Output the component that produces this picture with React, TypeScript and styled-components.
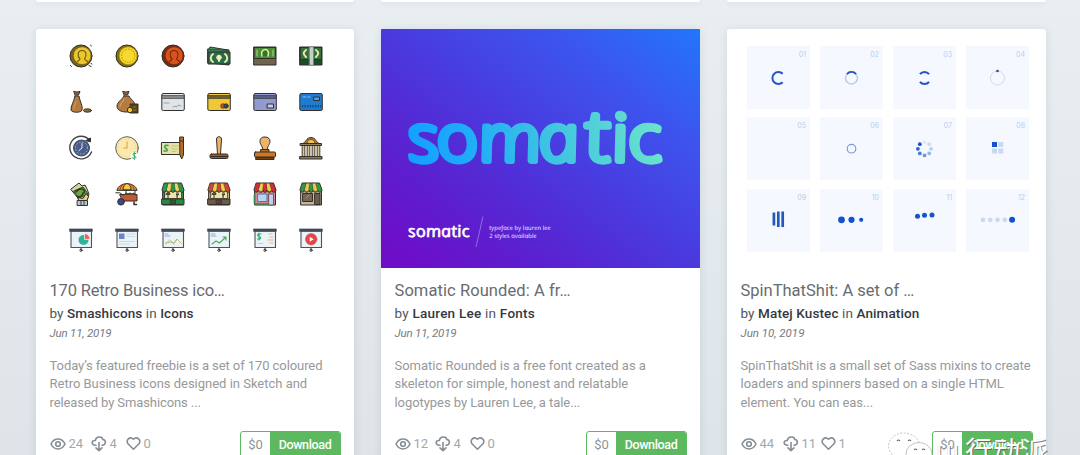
import React from "react";
import styled, { createGlobalStyle } from "styled-components";

const GlobalStyle = createGlobalStyle`
  *, *::before, *::after { box-sizing: border-box; }
  body { margin: 0; font-family: Roboto, "Open Sans", sans-serif; }
`;

const Page = styled.main`
  position: relative;
  width: 1080px;
  height: 455px;
  overflow: hidden;
  padding-left: 36px;
  display: flex;
  flex-direction: column;
  gap: 27px;
  background: linear-gradient(180deg, #e9eef1 0%, #e3e9ed 50%, #dee4e8 100%);
`;

const CardRow = styled.div`
  display: grid;
  grid-template-columns: 318px 319px 319px;
  column-gap: 27px;
`;

const CardEnd = styled.div`
  height: 2px;
  background: #fff;
  border-radius: 0 0 2px 2px;
  box-shadow: 0 1px 5px rgba(90, 110, 125, 0.16);
`;

const Card = styled.article`
  height: 450px;
  background: #fff;
  border-radius: 3px;
  box-shadow: 0 1px 8px rgba(90, 110, 125, 0.17);
`;

const Cover = styled.div`
  height: 239px;
  border-radius: 3px 3px 0 0;
  overflow: hidden;
`;

const IconGrid = styled(Cover)`
  display: grid;
  grid-template-columns: repeat(6, 24px);
  grid-auto-rows: 24px;
  column-gap: 22px;
  row-gap: 21.9px;
  padding: 15px 0 0 33px;
`;

const Retro = styled.svg`
  width: 24px;
  height: 24px;
  display: block;
  overflow: visible;
`;

const Poster = styled(Cover)`
  border-radius: 1px 1px 0 0;
  background: linear-gradient(217deg, #2276fb 0%, #3c55ee 24%, #4c36dc 53%, #5b20cf 74%, #720ac6 100%);
`;

const PosterArt = styled.svg`
  display: block;
  width: 319px;
  height: 239px;
`;

const TileGrid = styled(Cover)`
  display: grid;
  grid-template-columns: repeat(4, 63.5px);
  grid-auto-rows: 63px;
  column-gap: 9.5px;
  row-gap: 8.4px;
  padding: 17px 0 0 19.5px;
`;

const Tile = styled.div`
  background: #f5f9ff;
  padding: 4px 4px 0 0;
`;

const TileNumber = styled.div`
  font: 400 7px/10px Inter, sans-serif;
  height: 10px;
  text-align: right;
  color: #b9cdec;
`;

const Spinner = styled.svg`
  display: block;
  width: 63px;
  height: 40px;
`;

const Body = styled.div`
  padding: 11px 13px 0 13.5px;
`;

const Title = styled.h2<{ $track: number }>`
  margin: 0;
  font-size: 16.5px;
  line-height: 24px;
  font-weight: 400;
  color: #686b70;
  white-space: nowrap;
  letter-spacing: ${(p) => p.$track}px;
`;

const Byline = styled.p<{ $track: number }>`
  margin: 0;
  font-size: 13.5px;
  line-height: 20px;
  color: #50555b;
  white-space: nowrap;
  letter-spacing: ${(p) => p.$track}px;

  strong { font-weight: 500; color: #34393f; }
`;

const PostDate = styled.p<{ $track: number }>`
  margin: 0;
  font-size: 11.5px;
  line-height: 20px;
  font-style: italic;
  color: #777a7e;
  letter-spacing: ${(p) => p.$track}px;
`;

const Excerpt = styled.div`
  margin-top: 13.5px;
  font-size: 13px;
  line-height: 18.6px;
  color: #97999b;
`;

const ExcerptLine = styled.div<{ $track: number }>`
  white-space: nowrap;
  letter-spacing: ${(p) => p.$track}px;
`;

const Footer = styled.div`
  margin-top: 18.7px;
  display: flex;
  justify-content: space-between;
`;

const Stats = styled.div`
  display: flex;
  height: 26px;
  align-items: center;
`;

const Stat = styled.span<{ $width: number }>`
  display: flex;
  align-items: center;
  gap: 3px;
  width: ${(p) => p.$width}px;
  font-size: 13px;
  line-height: 16px;
  color: #a3a8ad;

  svg { flex: none; display: block; }
`;

const Count = styled.span`
  padding-top: 1px;
`;

const Buy = styled.div`
  display: flex;
  width: 101px;
  height: 27px;
  border: 1px solid #5cb95f;
  border-radius: 3px;
  overflow: hidden;
  font-size: 13px;
  line-height: 25px;
  text-align: center;
`;

const Price = styled.span`
  width: 29px;
  color: #8d959c;
`;

const Download = styled.span`
  flex: 1;
  background: #5cb95f;
  color: #fff;
  font-size: 12.5px;
  font-weight: 500;
  letter-spacing: -0.35px;
`;

const Watermark = styled.div`
  position: absolute;
  left: 888px;
  top: 431px;
  display: flex;
  color: #fff;
  font: 400 27px/32px "Noto Sans CJK SC", sans-serif;
  white-space: nowrap;
  text-shadow: 1px 1px 0 rgba(90, 90, 90, 0.75), -0.5px -0.5px 0 rgba(150, 150, 150, 0.4);
  letter-spacing: 1px;
`;

const WatermarkLogo = styled.svg`
  width: 48px;
  height: 36px;
`;

const WatermarkLatin = styled.span`
  width: 29px;
  margin-top: 4px;
  font-size: 22px;
`;

const WatermarkName = styled.span`
  margin-top: 3px;
`;

const dark = "#33302c";

function Base({ children }: { children: React.ReactNode }) {
  return (
    <Retro viewBox="0 0 24 24" fill="none" stroke={dark} strokeWidth="1" strokeLinejoin="round" strokeLinecap="round">
      {children}
    </Retro>
  );
}

function Coin({ rim, face, line, head, sparks }: { rim: string; face: string; line: string; head?: boolean; sparks?: boolean }) {
  return (
    <Base>
      <circle cx="12" cy="12" r="11" fill={rim} />
      <circle cx="13.2" cy="11.7" r="9" fill={face} stroke={line} strokeWidth="0.8" />
      {head ? (
        <path d="M8 18c1-2 3-1.8 3-3-3-3-2.5-8.5 2-8.5S18 11 15.6 14.8c0 1.5 2 1.3 3 3" stroke={line} strokeWidth="1.1" />
      ) : (
        <circle cx="13.2" cy="11.7" r="6.6" stroke={line} strokeDasharray="0.6 2" strokeWidth="1" />
      )}
      {sparks && <path d="M21.5 1.2l1 .8M1.5 21.5l1 1M20 21.5l2 1M22 19.5l1 .5" />}
    </Base>
  );
}

function Note({ kind }: { kind: number }) {
  if (kind === 0)
    return (
      <Base>
        <path d="M1 5l21 1v15L1 19z" fill="#3c7a55" />
        <path d="M2 5l1-2 18 3" fill="#4f8d63" />
        <rect x="1.5" y="8" width="21.500" height="12" fill="#2b6b49" />
        <path d="M6 10c-3 2-3 6 0 8M18 10c3 2 3 6 0 8M12 17v-2" stroke="#e9efae" strokeWidth="2" />
        <circle cx="12" cy="13.500" r="2.300" fill="#f2f0bb" stroke="#e9efae" />
      </Base>
    );
  if (kind === 1)
    return (
      <Base>
        <rect x="1" y="3" width="22" height="18" fill="#70644c" />
        <rect x="1.500" y="3.500" width="21" height="11" fill="#4b8d39" />
        <path d="M4 6v6M20 6v6" stroke="#b5d88b" strokeWidth="1" />
        <path d="M9 12c-3-8 9-9 6 0" fill="#32722a" stroke="#e3f0a6" strokeWidth="1.500" />
      </Base>
    );
  return (
    <Base>
      <rect x="1" y="3" width="22" height="18" fill="#1d4a28" />
      <rect x="1.500" y="3.500" width="21" height="12" fill="#357138" />
      <path d="M7 6c-3 2-3 4 0 7M17 6c3 2 3 4 0 7" stroke="#e5edb0" strokeWidth="2" />
      <rect x="10.500" y="3" width="4" height="18" fill="#c6cfcb" stroke="#777" strokeWidth=".5" />
    </Base>
  );
}

function Bag({ round }: { round?: boolean }) {
  return (
    <Base>
      <path d="M5 1.500q3 1 6 0L9.500 5h-3z" fill="#8e6244" transform={round ? "translate(3)" : ""} />
      {round ? (
        <path d="M9 6h5c1 3 6 5 6 10 0 4-3 6-8.500 6S2 20 2 16 8 9 9 6z" fill="#b57b43" />
      ) : (
        <path d="M6 6h4c1 6 4 10 3 14-.5 3-10.500 3-11 0C1.500 16 5 12 6 6z" fill="#b57b43" />
      )}
      {round ? (
        <>
          <path d="M5 16c0-3 4-4 4-7" stroke="#e8a965" />
          <rect x="15.500" y="14" width="7.500" height="9" fill="#55410f" />
          <circle cx="15" cy="20" r="2.700" fill="#f5c632" />
          <path d="M18 17h3M18 20h3" stroke="#9d7b1c" />
        </>
      ) : (
        <>
          <path d="M5 19c-1-3 2-5 2-8" stroke="#d59a5c" />
          <ellipse cx="18.500" cy="20.500" rx="4" ry="1.700" fill="#877038" />
        </>
      )}
    </Base>
  );
}

function CreditCard({ fill, band, kind }: { fill: string; band: string; kind: number }) {
  return (
    <Base>
      <rect x=".8" y="3.500" width="22.500" height="17" rx="1.500" fill={fill} />
      {kind !== 3 && <path d="M1.300 5.500h21.500v3H1.300z" fill={band} strokeWidth=".6" />}
      {kind === 0 && <path d="M3 13h5m4 4l2-1 1 1 3-2 2 1" stroke="#9199a5" strokeWidth=".9" />}
      {kind === 1 && (
        <g strokeWidth=".7">
          <circle cx="16" cy="16" r="2.300" fill="#e5463b" />
          <circle cx="19" cy="16" r="2.300" fill="#33426a" />
        </g>
      )}
      {kind === 2 && <rect x="14.500" y="14" width="6" height="4" fill="#c3cbf0" />}
      {kind === 3 && (
        <>
          <rect x="15" y="7" width="5.500" height="3.500" fill="#48a1ea" />
          <path d="M4 7h3M9 7h2" stroke="#7fc4f6" />
          <path d="M3 16.300h19" stroke="#0c3c75" strokeWidth="2" strokeDasharray="1.200 1.400" strokeLinecap="butt" />
        </>
      )}
    </Base>
  );
}

function Clock({ light }: { light?: boolean }) {
  return light ? (
    <Base>
      <circle cx="12" cy="12" r="11.300" fill="#fbe9ae" stroke="#686055" />
      <circle cx="12" cy="12" r="9" stroke="#e8ce88" strokeDasharray=".6 3" />
      <path d="M12 6v6H9" stroke="#e3b95d" strokeWidth="1.500" />
      <circle cx="19.500" cy="20" r="4" fill="#fff" stroke="none" />
      <path d="M21 17.500c-5-1-3 2-1.500 2.500s3 3-2 2M19.300 16v7.500" stroke="#35ae5e" strokeWidth="1" />
    </Base>
  ) : (
    <Base>
      <path d="M20.500 4A11.300 11.300 0 1 0 22.500 16" stroke="#44444a" strokeWidth="1.400" />
      <path d="M17 4.500l4.500-2.500v3.500z" fill={dark} />
      <circle cx="12.500" cy="12" r="8" fill="#4a5e88" stroke="#3c496c" />
      <circle cx="12.500" cy="12" r="6" stroke="#a9b7d8" strokeDasharray=".6 2.600" />
      <path d="M13 7.500V12l-3 2.500" stroke="#e4ebfb" />
    </Base>
  );
}

function Cheque() {
  return (
    <Base>
      <rect x=".8" y="6.500" width="21.500" height="12" fill="#e4e1a5" />
      <path d="M11 10h6M11 13h6M11 15.500h4" stroke="#c2b87a" strokeWidth=".8" />
      <path d="M7 9.500c-5-1-3 2.500-2 3s3 3-2 2.500" stroke="#35a156" strokeWidth="1.500" />
      <path d="M19 1h3.500v18L20.700 23 19 19z" fill="#b96a22" />
      <path d="M19 5h3.500" />
    </Base>
  );
}

function Stamp({ round }: { round?: boolean }) {
  return (
    <Base>
      {round ? (
        <>
          <path d="M10 15c0-5-3-6-3-9.500S9 1 12 1s5 1.500 5 4.500-3 4.500-3 9.500z" fill="#eeb46b" />
          <rect x="8" y="13.500" width="8" height="3" fill="#bb661b" />
          <rect x="1.500" y="16" width="21" height="5" rx="1" fill="#ce7625" />
          <path d="M3 21.500h18v2H3z" fill="#7b430f" />
        </>
      ) : (
        <>
          <path d="M10.500 18L9.500 3c0-3 5-3 5 0l-1 15z" fill="#eeb46b" />
          <rect x="3" y="18" width="18" height="4.500" rx="1.500" fill="#a9571b" />
          <path d="M4 20.500h16" />
        </>
      )}
    </Base>
  );
}

function Bank() {
  return (
    <Base>
      <path d="M3 8c4-1 4-6.500 9-6.500S17 7 21 8z" fill="#b17c2d" />
      <path d="M8 7c1-5 7-5 8 0" fill="#f1c154" stroke="#6f4c1c" />
      <path d="M1.500 7.500h21v2h-21z" fill="#8e8266" />
      <path d="M4.500 10v10M9.500 10v10M14.500 10v10M19.500 10v10" stroke={dark} strokeWidth="3.600" strokeLinecap="butt" />
      <path d="M4.500 10v10M9.500 10v10M14.500 10v10M19.500 10v10" stroke="#d8c795" strokeWidth="1.800" strokeLinecap="butt" />
      <path d="M1 20.500h22V23H1z" fill="#897b58" />
    </Base>
  );
}

function HandMoney() {
  return (
    <Base>
      <path d="M2 7l8-6 3 3 3-1 2 4 2 5-2 6-8-1z" fill="#cfd8a0" />
      <path d="M5 9l9-4 5 7-9 4z" fill="#70a344" />
      <path d="M7 10c3-5 10-3 8 1M8 14c3 2 6-1 6-3" stroke="#26401c" strokeWidth="1.500" />
      <path d="M9 15.500l5 1 3-5 2.500 3-1.500 4-7.500 1z" fill="#e3cf7e" />
      <path d="M8.500 18.500h10v5h-10z" fill="#b9c6cf" />
      <path d="M12 19v4M15 19v4" stroke="#39424a" />
    </Base>
  );
}

function Cart() {
  return (
    <Base>
      <path d="M11 8v7M20 8v7" />
      <path d="M2 8C4-.5 20-.5 22 8z" fill="#dd9226" />
      <path d="M8 7.500C8 4 10 2 12 1.500 14 2 16 4 16 7.500z" fill="#f3cd47" />
      <path d="M5 7.500C5 5 7 3 9 2M19 7.500C19 5 17 3 15 2" stroke="#b23d23" />
      <path d="M5 12.500h17v6.500H8z" fill="#c75733" />
      <path d="M.8 10.800h4l3 2.200" />
      <path d="M9 13l2-2 2 1 2-1 2 1 2-1 1 2" fill="#604a28" />
      <circle cx="6" cy="19.800" r="3.300" fill="#354a91" />
      <path d="M19 20v2.500h2.500" strokeWidth="1.500" />
    </Base>
  );
}

function Shop({ a, b, body, kind }: { a: string; b: string; body: string; kind: number }) {
  return (
    <Base>
      <rect x="2" y="8" width="20.500" height="15" fill={body} />
      {kind < 2 && (
        <>
          <rect x="4" y="9" width="16.500" height="7.500" fill="#f1e4a8" strokeWidth=".7" />
          <path d="M7 16v-3M5 12c1-2 4-2 4 0zM16 16v-3l-1-1h3l-1 1" fill="#c84533" />
          <path d="M1 17h22v5.500H1z" fill={kind ? "#6d5b4a" : "#258943"} />
          <path d="M9.500 18h5v4h-5z" fill={kind ? "#574539" : "#335a2c"} strokeWidth=".7" />
        </>
      )}
      {kind === 2 && (
        <>
          <rect x="5" y="12" width="9" height="7.500" fill="#b9d4f0" stroke="#5672a0" />
          <rect x="16" y="12" width="4.500" height="11" fill="#b9d4f0" stroke="#804f58" />
          <path d="M1.500 13v8M3 22h12" stroke="#2e8a4d" strokeWidth="1.700" />
        </>
      )}
      {kind === 3 && (
        <>
          <rect x="4" y="11.500" width="9.500" height="8" fill="#786655" />
          <rect x="16" y="11.500" width="5" height="11" fill="#6b5d4c" />
          <path d="M7 16l3-3" stroke="#a39480" />
        </>
      )}
      <path d="M3.500 1h17L23 8c0 3-4.400 3-4.400 0 0 3-4.400 3-4.400 0 0 3-4.400 3-4.400 0 0 3-4.400 3-4.400 0 0 3-4.400 3-4.400 0z" fill={a} />
      <path d="M7.500 1.300h3L9.700 8.500C9 10 6.200 9.800 5.500 8.200zM13.500 1.300h3l2 7c-.8 1.500-3.500 1.500-4.200 0z" fill={b} strokeWidth=".4" />
    </Base>
  );
}

function Board({ children }: { children: React.ReactNode }) {
  return (
    <Base>
      <path d="M12 19.500v2" />
      <rect x="2" y="3" width="20.500" height="16.500" fill="#eaf3f8" stroke="#4a5260" strokeWidth="1.100" />
      <rect x=".8" y="1" width="22.500" height="2.300" fill="#454c5c" stroke="#3b4250" strokeWidth=".7" />
      <circle cx="12" cy="22.300" r="1.100" fill="#fff" />
      {children}
    </Base>
  );
}

const retroIcons = [
  <Coin rim="#776617" face="#edc52d" line="#675716" head sparks />,
  <Coin rim="#806e13" face="#f6d92c" line="#ae8e0c" />,
  <Coin rim="#732d13" face="#d9531c" line="#76260d" head />,
  <Note kind={0} />,
  <Note kind={1} />,
  <Note kind={2} />,
  <Bag />,
  <Bag round />,
  <CreditCard fill="#dfe4e8" band="#858990" kind={0} />,
  <CreditCard fill="#efc837" band="#706027" kind={1} />,
  <CreditCard fill="#929bd0" band="#585f86" kind={2} />,
  <CreditCard fill="#1f7bd0" band="#1f7bd0" kind={3} />,
  <Clock />,
  <Clock light />,
  <Cheque />,
  <Stamp />,
  <Stamp round />,
  <Bank />,
  <HandMoney />,
  <Cart />,
  <Shop a="#2c9649" b="#efd565" body="#318d44" kind={0} />,
  <Shop a="#cf4931" b="#f0cf53" body="#c8ab70" kind={1} />,
  <Shop a="#cf2f35" b="#efcf4c" body="#d38a90" kind={2} />,
  <Shop a="#329548" b="#f0c74a" body="#c4b698" kind={3} />,
  <Board>
    <circle cx="14.500" cy="12" r="5" fill="#2eb597" stroke="none" />
    <path d="M15.500 11V5.500a5.500 5.500 0 0 1 5.500 5.500z" fill="#ef6160" stroke="#eaf3f8" strokeWidth=".8" />
  </Board>,
  <Board>
    <rect x="4" y="5.500" width="5.500" height="5.500" fill="#6d82c8" stroke="none" />
    <path d="M12 6h8M12 8.500h8M4.500 13.500h15M4.500 16h10" stroke="#c5d0de" strokeWidth=".8" />
  </Board>,
  <Board>
    <path d="M4 6h3M4 8h5" stroke="#98a9d8" />
    <path d="M4.500 16l4-4 4 3 3.500-4 4.500 4.500" stroke="#d7b85e" />
    <path d="M5 15l5-1 3 2 3-5" stroke="#83b979" strokeDasharray="1 1.500" />
  </Board>,
  <Board>
    <path d="M4 6h4M4 8h5" stroke="#98a9d8" />
    <path d="M5 16l4-3 3.500 2 6.500-6m-3 0h3v3" stroke="#54a461" strokeWidth="1.100" />
  </Board>,
  <Board>
    <path d="M8 6c-4-1-4 2-2 2.500s3 3-1.500 2.500M6 5v7" stroke="#37a967" strokeWidth="1.100" />
    <path d="M16 6h3M17 9h3M15 12h5M17 15h3" stroke="#ebb08a" strokeWidth="1" />
    <path d="M5 15.500h5" stroke="#c5d0de" />
  </Board>,
  <Board>
    <circle cx="12.200" cy="11.200" r="5.700" fill="#e84545" stroke="#d43c3d" strokeWidth=".5" />
    <path d="M10.700 8.700v5l4-2.500z" fill="#fff" stroke="none" />
  </Board>,
];

const blue = "#1553cd";
const pale = "#cbd9f0";

/* Each drawing is centred on the origin of its tile. */
const spinners: React.ReactNode[] = [
  <path d="M4.200-4.200A6 6 0 1 0 4.200 4.200" stroke="#2454c9" strokeWidth="2" />,
  <>
    <circle r="6" stroke="#b8cef0" strokeWidth="1.600" />
    <path d="M-4.600-3.900A6 6 0 0 1 4.600-3.900" stroke="#2454b9" strokeWidth="1.700" />
  </>,
  <path d="M-4.600-3.900A6 6 0 0 1 4.600-3.900M-4.600 3.900A6 6 0 0 0 4.600 3.900" stroke="#2454c9" strokeWidth="2" />,
  <>
    <circle r="7" stroke="#c6d8e9" strokeWidth=".9" />
    <circle cy="-7" r="1.300" fill="#2450a0" />
  </>,
  null,
  <circle r="4.300" cy="-.3" stroke="#7a9bdc" strokeWidth="1.200" />,
  <>
    {["#e1eafb", "#ccdaf3", "#b9cdf0", "#98b5e8", "#7195de", "#4e7cd2", "#2b62cf", "#1553cd"].map((fill, i) => (
      <circle key={i} r="1.900" cx={6.600 * Math.sin((i * Math.PI) / 4)} cy={-0.2 - 6.600 * Math.cos((i * Math.PI) / 4)} fill={fill} />
    ))}
  </>,
  <>
    <path d="M-5.500-7h5v5h-5z" fill={blue} />
    <path d="M.8-7h5v5h-5zM-5.500-.5h5v5h-5zM.8-.5h5v5h-5z" fill={pale} />
  </>,
  <path d="M-4.600-8.500V4.500M-.2-9.500V6M4.200-9.500V6" stroke="#2456bc" strokeWidth="2.700" />,
  <>
    <circle cx="-10" cy="-1.200" r="3.400" fill={blue} />
    <circle cy="-1.200" r="3.100" fill={blue} />
    <circle cx="9.700" cy="-1.200" r="2.100" fill={blue} />
  </>,
  <>
    <circle cx="-7" cy="-4.700" r="2.500" fill={blue} />
    <circle cy="-5.700" r="2.500" fill={blue} />
    <circle cx="7.500" cy="-6" r="2.500" fill={blue} />
  </>,
  <>
    {[-14.500, -7.300, 0, 7.300].map((cx) => (
      <circle key={cx} cx={cx} cy="-1.200" r="2.400" fill={pale} />
    ))}
    <circle cx="14.600" cy="-1.200" r="3" fill={blue} />
  </>,
];

/* The italic cut has the single-storey "a"; a skew brings it upright again. */
const LogoText = styled.text`
  font-family: "Open Sans", "Noto Sans", sans-serif;
  font-style: italic;
  stroke-linejoin: round;
  stroke-linecap: round;
`;

function SomaticPoster() {
  return (
    <Poster>
      <PosterArt viewBox="0 0 319 239">
        <defs>
          <linearGradient id="wordmark" gradientUnits="userSpaceOnUse" x1="0" y1="0" x2="232" y2="0">
            <stop offset="0" stopColor="#12a0ff" />
            <stop offset=".25" stopColor="#20acf8" />
            <stop offset=".6" stopColor="#42c7df" />
            <stop offset="1" stopColor="#6ce3cb" />
          </linearGradient>
        </defs>
        <g transform="translate(27.500 132) skewX(12) scale(1.12 1)">
          <LogoText x="3 28.500 66 119.500 161.500 185 199.500" fontSize="65" fontWeight="300" fill="url(#wordmark)" stroke="url(#wordmark)" strokeWidth="6">
            soma<tspan fontSize="70">t</tspan>ic
          </LogoText>
        </g>
        <g transform="translate(28 207.500) skewX(12)">
          <LogoText fontSize="16.500" fontWeight="400" fill="#fff" stroke="#fff" strokeWidth=".6" textLength="61.500" lengthAdjust="spacingAndGlyphs">
            somatic
          </LogoText>
        </g>
        <path d="M102 187.500L95 218" stroke="#a78bea" strokeWidth=".7" />
        <g transform="translate(108.500 200.500) skewX(12)">
          <LogoText fontSize="6" fontWeight="500" fill="#efe6ff" textLength="61.500" lengthAdjust="spacingAndGlyphs">
            typeface by lauren lee
          </LogoText>
        </g>
        <g transform="translate(108.500 209) skewX(12)">
          <LogoText fontSize="6" fontWeight="500" fill="#efe6ff" textLength="47.500" lengthAdjust="spacingAndGlyphs">
            2 styles available
          </LogoText>
        </g>
      </PosterArt>
    </Poster>
  );
}

const outline = { fill: "none", stroke: "#858d96", strokeLinecap: "round", strokeLinejoin: "round" } as const;

function EyeIcon() {
  return (
    <svg width="16" height="16" viewBox="0 0 16 16" {...outline} strokeWidth="1.600">
      <path d="M1 8c3.300-6.600 10.700-6.600 14 0-3.300 6.600-10.700 6.600-14 0z" />
      <circle cx="8" cy="8" r="2.300" />
    </svg>
  );
}

function CloudDownIcon() {
  return (
    <svg width="16" height="16" viewBox="0 0 16 16" {...outline} strokeWidth="1.600">
      <path d="M5 9.200H3.800C.2 8.600.4 4.300 4.200 4.500 5-.2 11.500.1 11.700 3.500c3.800.5 3.500 5.500-.7 5.700" />
      <path d="M8 6.500V14.500M5 11.800l3 2.900 3-2.900" />
    </svg>
  );
}

function HeartIcon() {
  return (
    <svg width="15" height="15" viewBox="0 0 15 15" {...outline} strokeWidth="1.600">
      <path d="M7.500 13.200L2.200 8C-.6 4.500 3.700-.6 7.500 3.200 11.300-.6 15.600 4.500 12.800 8z" />
    </svg>
  );
}

type Line = [text: string, track: number];

interface Post {
  cover: React.ReactNode;
  title: Line;
  author: string;
  category: string;
  bylineTrack: number;
  date: Line;
  lines: Line[];
  stats: [number, number, number];
  statWidths: [number, number];
}

const posts: Post[] = [
  {
    cover: (
      <IconGrid>
        {retroIcons.map((icon, i) => (
          <React.Fragment key={i}>{icon}</React.Fragment>
        ))}
      </IconGrid>
    ),
    title: ["170 Retro Business ico…", -0.17],
    author: "Smashicons",
    category: "Icons",
    bylineTrack: 0.1,
    date: ["Jun 11, 2019", -0.17],
    lines: [
      ["Today’s featured freebie is a set of 170 coloured", -0.08],
      ["Retro Business icons designed in Sketch and", -0.01],
      ["released by Smashicons ...", -0.1],
    ],
    stats: [24, 4, 0],
    statWidths: [41, 35],
  },
  {
    cover: <SomaticPoster />,
    title: ["Somatic Rounded: A fr…", 0.08],
    author: "Lauren Lee",
    category: "Fonts",
    bylineTrack: 0.24,
    date: ["Jun 11, 2019", -0.17],
    lines: [
      ["Somatic Rounded is a free font created as a", -0.02],
      ["skeleton for simple, honest and relatable", 0],
      ["logotypes by Lauren Lee, a tale...", -0.06],
    ],
    stats: [12, 4, 0],
    statWidths: [40, 35],
  },
  {
    cover: (
      <TileGrid>
        {spinners.map((art, i) => (
          <Tile key={i}>
            <TileNumber>{String(i + 1).padStart(2, "0")}</TileNumber>
            <Spinner viewBox="-31.500 -18 63 40" fill="none">
              {art}
            </Spinner>
          </Tile>
        ))}
      </TileGrid>
    ),
    title: ["SpinThatShit: A set of …", 0],
    author: "Matej Kustec",
    category: "Animation",
    bylineTrack: 0.11,
    date: ["Jun 10, 2019", 0],
    lines: [
      ["SpinThatShit is a small set of Sass mixins to create", -0.1],
      ["loaders and spinners based on a single HTML", 0],
      ["element. You can eas...", -0.05],
    ],
    stats: [44, 11, 1],
    statWidths: [42, 38],
  },
];

export default function App() {
  return (
    <Page>
      <GlobalStyle />
      <CardRow>
        <CardEnd />
        <CardEnd />
        <CardEnd />
      </CardRow>
      <CardRow>
        {posts.map((post) => (
          <Card key={post.author}>
            {post.cover}
            <Body>
              <Title $track={post.title[1]}>{post.title[0]}</Title>
              <Byline $track={post.bylineTrack}>
                by <strong>{post.author}</strong> in <strong>{post.category}</strong>
              </Byline>
              <PostDate $track={post.date[1]}>{post.date[0]}</PostDate>
              <Excerpt>
                {post.lines.map(([text, track]) => (
                  <ExcerptLine key={text} $track={track}>
                    {text}
                  </ExcerptLine>
                ))}
              </Excerpt>
              <Footer>
                <Stats>
                  <Stat $width={post.statWidths[0]}>
                    <EyeIcon />
                    <Count>{post.stats[0]}</Count>
                  </Stat>
                  <Stat $width={post.statWidths[1]}>
                    <CloudDownIcon />
                    <Count>{post.stats[1]}</Count>
                  </Stat>
                  <Stat $width={30}>
                    <HeartIcon />
                    <Count>{post.stats[2]}</Count>
                  </Stat>
                </Stats>
                <Buy>
                  <Price>$0</Price>
                  <Download>Download</Download>
                </Buy>
              </Footer>
            </Body>
          </Card>
        ))}
      </CardRow>
      <Watermark>
        <WatermarkLogo viewBox="0 0 48 36" fill="#fff" stroke="#aaa" strokeWidth=".7">
          <ellipse cx="16" cy="15" rx="15.500" ry="13" strokeDasharray="2 1.500" />
          <ellipse cx="31" cy="23" rx="13" ry="11.500" />
          <path d="M9 10q1.500-2 3 0M20 10q1.500-2 3 0M26 19q1.500-2 3 0M34 19q1.500-2 3 0" fill="none" stroke="#666" strokeWidth="1.200" />
        </WatermarkLogo>
        <WatermarkLatin>UI</WatermarkLatin>
        <WatermarkName>行动派</WatermarkName>
      </Watermark>
    </Page>
  );
}
